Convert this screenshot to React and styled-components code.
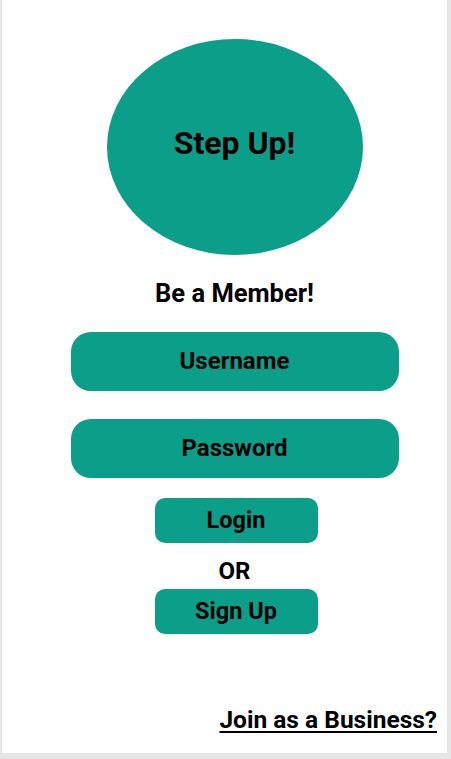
import React from 'react'
import styled, { createGlobalStyle } from 'styled-components'

const teal = '#0b9e88'

const GlobalStyle = createGlobalStyle`
  html, body {
    margin: 0;
    padding: 0;
    background: #e6e6e6;
  }
  * {
    box-sizing: border-box;
  }
`

function App() {
  return (
    <>
      <GlobalStyle />
      <ScPage>
        <ScLogo>
          <h1>Step Up!</h1>
        </ScLogo>
        <ScTitle>Be a Member!</ScTitle>
        <ScInput type="text" placeholder="Username" $top={25} />
        <ScInput type="password" placeholder="Password" $top={28} />
        <ScButton $top={20}>Login</ScButton>
        <ScOr>OR</ScOr>
        <ScButton $top={6}>Sign Up</ScButton>
        <ScFooter>
          <a href="#business">Join as a Business?</a>
        </ScFooter>
      </ScPage>
    </>
  )
}

const ScPage = styled.main`
  margin-left: 2px;
  width: 445px;
  height: 753px;
  padding: 39px 10px 0 30px;
  background: #ffffff;
  display: flex;
  flex-direction: column;
  align-items: center;
  font-family: Roboto, "Liberation Sans", sans-serif;
  color: #000;
`

const ScLogo = styled.div`
  width: 256px;
  height: 216px;
  border-radius: 50%;
  background: ${teal};
  display: flex;
  align-items: center;
  justify-content: center;
  h1 {
    margin: 0 0 8px;
    font-size: 32px;
    font-weight: 700;
    line-height: 1;
  }
`

const ScTitle = styled.h2`
  margin: 26px 0 0;
  font-size: 25.5px;
  font-weight: 700;
  line-height: 1;
`

const ScInput = styled.input`
  margin-top: ${p => p.$top}px;
  width: 328px;
  height: 59px;
  border: none;
  outline: none;
  border-radius: 20px;
  background: ${teal};
  text-align: center;
  font-family: inherit;
  font-size: 24px;
  font-weight: 700;
  color: #000;
  &::placeholder {
    color: #000;
    opacity: 1;
  }
`

const ScButton = styled.button`
  margin-top: ${p => p.$top}px;
  margin-left: 3px;
  width: 163px;
  height: 45px;
  padding: 0;
  border: none;
  border-radius: 10px;
  background: ${teal};
  font-family: inherit;
  font-size: 23.5px;
  font-weight: 700;
  color: #000;
  cursor: pointer;
`

const ScOr = styled.p`
  margin: 16px 0 0;
  font-size: 24px;
  font-weight: 700;
  line-height: 1;
`

const ScFooter = styled.div`
  align-self: flex-end;
  margin-top: 74px;
  font-size: 24.5px;
  line-height: 1;
  a {
    font-weight: 700;
    color: #000;
    text-decoration: underline;
    text-underline-offset: 3px;
  }
`

export default App
